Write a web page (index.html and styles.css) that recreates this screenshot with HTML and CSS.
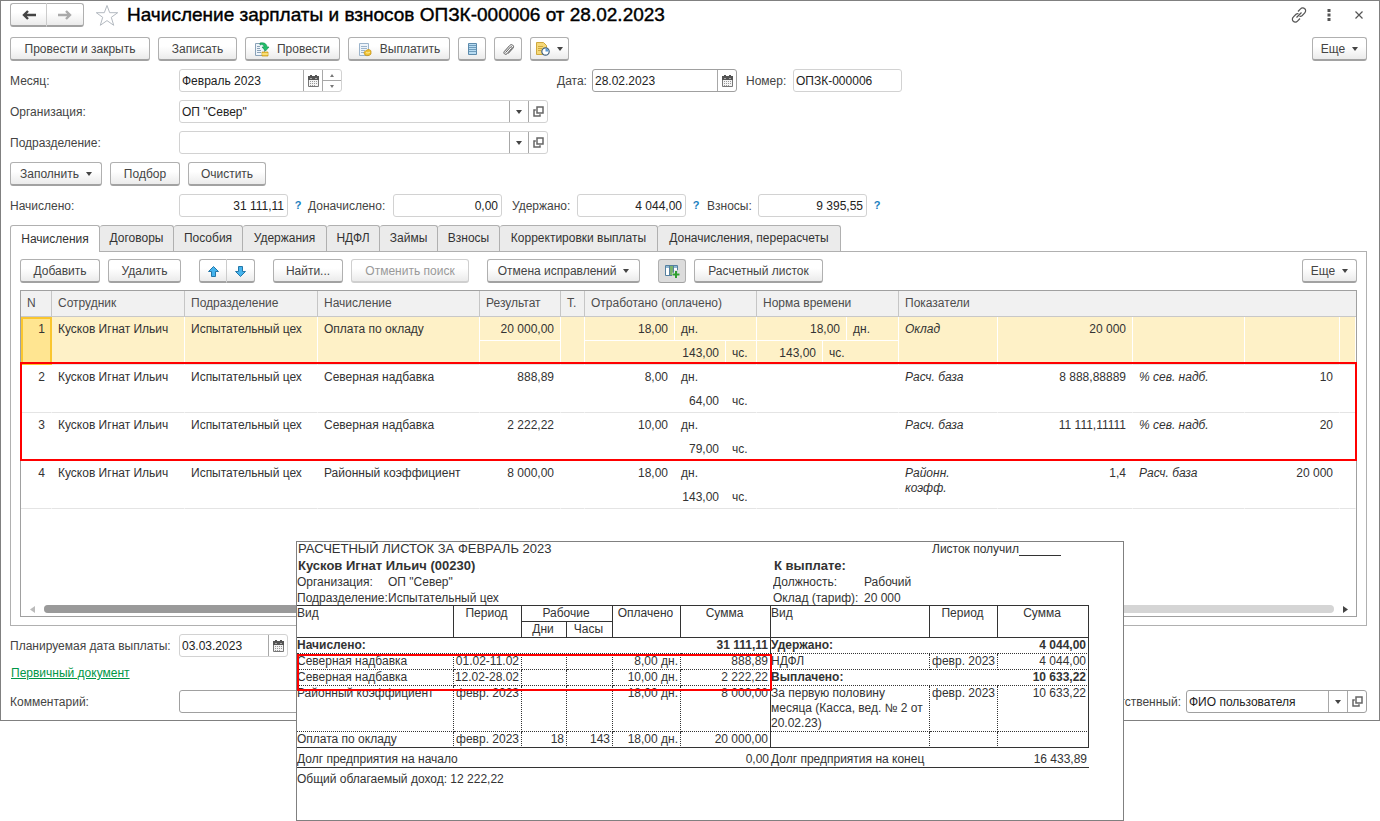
FILE: index.html
```html
<!DOCTYPE html>
<html lang="ru">
<head>
<meta charset="utf-8">
<title>Начисление зарплаты и взносов</title>
<link rel="stylesheet" href="styles.css">
</head>
<body>
<svg class="defs" aria-hidden="true">
  <symbol id="cal" viewBox="0 0 11 12"><path d="M.5 1.500h10v10H.5z" fill="#f4f4f4" stroke="#777"/><path d="M0 1h11v4H0z" fill="#555"/><path d="M2 0h2v2H2zM7 0h2v2H7z" fill="#555"/><path d="M2 3h2v1H2zM7 3h2v1H7z" fill="#aaa"/><path d="M2 6h1v1H2zM4 6h1v1H4zM6 6h1v1H6zM8 6h1v1H8zM2 8h1v1H2zM4 8h1v1H4zM6 8h1v1H6zM8 8h1v1H8zM2 10h1v1H2zM4 10h1v1H4zM6 10h1v1H6z" fill="#999"/></symbol>
  <symbol id="open" viewBox="0 0 11 11"><path d="M4 1h6v6H4z" fill="none" stroke="#666" stroke-width="1.500"/><path d="M2.800 4H1v6h6V8.200" fill="none" stroke="#666" stroke-width="1.500"/></symbol>
  <symbol id="down" viewBox="0 0 6 4"><path d="M0 0h6L3 4z" fill="#444"/></symbol>
</svg>
<main class="window">
  <header class="titlebar">
    <div class="pair nav">
      <button class="btn" aria-label="Назад"><svg width="14" height="10" viewBox="0 0 14 10"><path d="M14 5H3M6 1L2 5l4 4" fill="none" stroke="#444" stroke-width="2.400"/></svg></button><button class="btn" aria-label="Вперед"><svg width="14" height="10" viewBox="0 0 14 10"><path d="M0 5h11M8 1l4 4-4 4" fill="none" stroke="#aaa" stroke-width="2.400"/></svg></button>
    </div>
    <button class="plain star" aria-label="Избранное"><svg width="24" height="23" viewBox="0 0 24 23"><path d="M12 1.500l2.700 7.200h8L16.300 13.300l2.400 8L12 16.600l-6.700 4.700 2.400-8L1.300 8.700h8z" fill="#fff" stroke="#b3b9c0"/></svg></button>
    <h1>Начисление зарплаты и взносов ОПЗК-000006 от 28.02.2023</h1>
    <div class="tools">
      <button class="plain" aria-label="Ссылка"><svg width="16" height="16" viewBox="0 0 16 16"><path d="M7 4.500l2.500-2.700a2.800 2.800 0 0 1 4.300 0 2.800 2.800 0 0 1 0 4L11 8.700a2.600 2.600 0 0 1-2.500.5M9 11.500l-2.500 2.700a2.800 2.800 0 0 1-4.300 0 2.800 2.800 0 0 1 0-4L5 7.300a2.600 2.600 0 0 1 2.500-.5M5.500 10.500l5-5" fill="none" stroke="#555" stroke-width="1.200"/></svg></button>
      <button class="plain" aria-label="Меню"><svg width="4" height="12" viewBox="0 0 4 12"><path d="M.5 0h3v3h-3zM.5 4.500h3v3h-3zM.5 9h3v3h-3z" fill="#555"/></svg></button>
      <button class="plain" aria-label="Закрыть"><svg width="8" height="8" viewBox="0 0 8 8"><path d="M.5.5l7 7M7.500.5l-7 7" stroke="#555" stroke-width="1.200"/></svg></button>
    </div>
  </header>

  <div class="bar">
    <button class="btn w140">Провести и закрыть</button>
    <button class="btn w79">Записать</button>
    <button class="btn w95"><svg width="15" height="15" viewBox="0 0 15 15"><path d="M.5 1.500h9v12h-9z" fill="#eef4fa" stroke="#8aa2b8"/><path d="M2 4.500h3M2 6.500h3M2 8.500h4M2 10.500h4" stroke="#8aa2b8"/><path d="M5 1c4-1 7 1 7 4h2l-3.500 4L7 5h2c0-2-2-3-4-2z" fill="#1fbf68" stroke="#12894a" stroke-width=".6"/><path d="M7 10h6v4H7z" fill="#f2c83c" stroke="#c29317" stroke-width=".7"/><path d="M7 12h6" stroke="#fff3b0"/></svg>Провести</button>
    <button class="btn w102"><svg width="15" height="15" viewBox="0 0 15 15"><path d="M1.500 1.500h9v12h-9z" fill="#eef4fa" stroke="#9cb4cb"/><path d="M3 4.500h6M3 6.500h6M3 8.500h4M3 10.500h3" stroke="#9cb4cb"/><path d="M6 11c0-2 2-2 3-3s4 0 4 1v3c-1 2-5 2-6 1z" fill="#f0c232" stroke="#bd8d18" stroke-width=".7"/><path d="M8 10.500c1 .8 3 .5 4-.5" fill="none" stroke="#fff0a0"/></svg>Выплатить</button>
    <button class="btn w28" aria-label="Реестр"><svg width="9" height="12" viewBox="0 0 9 12"><path d="M.5.5h8v11h-8z" fill="#b9dcf2" stroke="#5d8bac"/><path d="M1 2.500h7M1 4.500h7M1 6.500h7M1 8.500h7" stroke="#6f9dbd"/></svg></button>
    <button class="btn w28" aria-label="Файлы"><svg width="13" height="13" viewBox="0 0 13 13"><path d="M3.500 9.500l5-5.500c1-1 2.300.3 1.400 1.300L5 10.700c-1.600 1.700-4.200-.4-2.600-2.300L7.700 2.500c2-2.200 5.300.5 3.200 2.800L6 10.700" fill="none" stroke="#555" stroke-width="1"/></svg></button>
    <button class="btn w39" aria-label="Отчеты"><svg width="14" height="14" viewBox="0 0 14 14"><path d="M.5.5h7l3 3v9H.5z" fill="#f5d878" stroke="#cfa83e"/><path d="M2 4.500h5M2 6.500h4M2 8.500h3" stroke="#cfa83e"/><circle cx="9.500" cy="9.500" r="3.700" fill="#fff" stroke="#42627f" stroke-width="1.200"/><path d="M9.500 9.500V6.500a3 3 0 0 1 3 3z" fill="#5b9bd5"/></svg><svg width="6" height="4"><use href="#down"/></svg></button>
    <button class="btn w55 last">Еще <svg width="6" height="4"><use href="#down"/></svg></button>
  </div>

  <div class="row">
    <label class="lead" for="month">Месяц:</label>
    <div class="slot"><div class="field month"><input id="month" value="Февраль 2023"><button aria-label="Календарь"><svg width="11" height="12"><use href="#cal"/></svg></button><span class="spin"><button aria-label="Больше"><svg width="4" height="3" viewBox="0 0 4 3"><path d="M0 3h4L2 0z" fill="#777"/></svg></button><button aria-label="Меньше"><svg width="4" height="3" viewBox="0 0 4 3"><path d="M0 0h4L2 3z" fill="#777"/></svg></button></span></div></div>
    <label class="date-label" for="date">Дата:</label>
    <div class="field active date"><input id="date" value="28.02.2023"><button aria-label="Календарь"><svg width="11" height="12"><use href="#cal"/></svg></button></div>
    <label class="number-label" for="number">Номер:</label>
    <div class="field small"><input id="number" value="ОПЗК-000006"></div>
  </div>
  <div class="row">
    <label class="lead" for="org">Организация:</label>
    <div class="field slot"><input id="org" value='ОП "Север"'><button aria-label="Выбрать"><svg width="6" height="4"><use href="#down"/></svg></button><button aria-label="Открыть"><svg width="11" height="11"><use href="#open"/></svg></button></div>
  </div>
  <div class="row">
    <label class="lead" for="dept">Подразделение:</label>
    <div class="field slot"><input id="dept"><button aria-label="Выбрать"><svg width="6" height="4"><use href="#down"/></svg></button><button aria-label="Открыть"><svg width="11" height="11"><use href="#open"/></svg></button></div>
  </div>
  <div class="bar">
    <button class="btn w92">Заполнить <svg width="6" height="4"><use href="#down"/></svg></button>
    <button class="btn w70">Подбор</button>
    <button class="btn w78">Очистить</button>
  </div>
  <div class="row">
    <label class="lead" for="accrued">Начислено:</label>
    <div class="field small num"><input id="accrued" value="31 111,11"></div><button class="plain help">?</button>
    <label class="extra-label" for="extra">Доначислено:</label>
    <div class="field small num"><input id="extra" value="0,00"></div>
    <label class="held-label" for="held">Удержано:</label>
    <div class="field small num"><input id="held" value="4 044,00"></div><button class="plain help">?</button>
    <label class="contrib-label" for="contrib">Взносы:</label>
    <div class="field small num"><input id="contrib" value="9 395,55"></div><button class="plain help">?</button>
  </div>

  <section class="tabbed">
    <nav class="tabs" role="tablist">
      <button role="tab" aria-selected="true" class="w90 current">Начисления</button><button role="tab" class="w74">Договоры</button><button role="tab" class="w69">Пособия</button><button role="tab" class="w84">Удержания</button><button role="tab" class="w53">НДФЛ</button><button role="tab" class="w58">Займы</button><button role="tab" class="w62">Взносы</button><button role="tab" class="w158">Корректировки выплаты</button><button role="tab" class="w183">Доначисления, перерасчеты</button>
    </nav>
    <div class="panel">
      <div class="bar">
        <button class="btn w80">Добавить</button>
        <button class="btn w73">Удалить</button>
        <div class="pair move">
          <button class="btn" aria-label="Вверх"><svg width="11" height="11" viewBox="0 0 11 11"><path d="M5.500.5l5 5h-3v5h-4v-5h-3z" fill="#45b4ee" stroke="#2477a8"/></svg></button><button class="btn" aria-label="Вниз"><svg width="11" height="11" viewBox="0 0 11 11"><path d="M5.500 10.500l5-5h-3v-5h-4v5h-3z" fill="#45b4ee" stroke="#2477a8"/></svg></button>
        </div>
        <button class="btn w70">Найти...</button>
        <button class="btn w118" disabled>Отменить поиск</button>
        <button class="btn w153 apart">Отмена исправлений <svg width="6" height="4"><use href="#down"/></svg></button>
        <button class="btn w28 apart pressed" aria-label="Показатели"><svg width="15" height="13" viewBox="0 0 15 13"><path d="M.5.5h12v10H.5z" fill="#fff" stroke="#55809f"/><path d="M1 1h11v2H1z" fill="#8fb7d3"/><path d="M5 1h3v9H5z" fill="#79b36c"/><path d="M4.500 1v9M8.500 1v9" stroke="#55809f"/><path d="M11 5v8M7 9.500h8" stroke="#e4e4e4" stroke-width="3.500"/><path d="M11 6v7M7.500 9.500h7" stroke="#2f9e2f" stroke-width="2"/></svg></button>
        <button class="btn w129">Расчетный листок</button>
        <button class="btn w55 last">Еще <svg width="6" height="4"><use href="#down"/></svg></button>
      </div>
      <div class="list">
        <table class="grid">
          <colgroup><col class="c31"><col class="c133"><col class="c133"><col class="c162"><col class="c81"><col class="c24"><col class="c172"><col class="c142"><col class="c99"><col class="c135"><col class="c112"><col class="c95"><col></colgroup>
          <thead><tr><th>N</th><th>Сотрудник</th><th>Подразделение</th><th>Начисление</th><th>Результат</th><th>Т.</th><th>Отработано (оплачено)</th><th>Норма времени</th><th colspan="5">Показатели</th></tr></thead>
          <tbody>
            <tr class="selected"><td class="num key">1</td><td>Кусков Игнат Ильич</td><td>Испытательный цех</td><td>Оплата по окладу</td>
              <td class="split"><div class="line"><span class="val all">20 000,00</span></div><div class="line"></div></td><td></td>
              <td class="split"><div class="line"><span class="val days">18,00</span><span>дн.</span></div><div class="line"><span class="val hours">143,00</span><span>чс.</span></div></td>
              <td class="split"><div class="line"><span class="val days">18,00</span><span>дн.</span></div><div class="line"><span class="val norm">143,00</span><span>чс.</span></div></td>
              <td class="ital">Оклад</td><td class="num">20 000</td><td></td><td></td><td></td></tr>
            <tr><td class="num">2</td><td>Кусков Игнат Ильич</td><td>Испытательный цех</td><td>Северная надбавка</td><td class="num">888,89</td><td></td>
              <td class="split"><div class="line"><span class="val days">8,00</span><span>дн.</span></div><div class="line"><span class="val hours">64,00</span><span>чс.</span></div></td><td></td>
              <td class="ital">Расч. база</td><td class="num">8 888,88889</td><td class="ital">% сев. надб.</td><td class="num">10</td><td></td></tr>
            <tr><td class="num">3</td><td>Кусков Игнат Ильич</td><td>Испытательный цех</td><td>Северная надбавка</td><td class="num">2 222,22</td><td></td>
              <td class="split"><div class="line"><span class="val days">10,00</span><span>дн.</span></div><div class="line"><span class="val hours">79,00</span><span>чс.</span></div></td><td></td>
              <td class="ital">Расч. база</td><td class="num">11 111,11111</td><td class="ital">% сев. надб.</td><td class="num">20</td><td></td></tr>
            <tr><td class="num">4</td><td>Кусков Игнат Ильич</td><td>Испытательный цех</td><td>Районный коэффициент</td><td class="num">8 000,00</td><td></td>
              <td class="split"><div class="line"><span class="val days">18,00</span><span>дн.</span></div><div class="line"><span class="val hours">143,00</span><span>чс.</span></div></td><td></td>
              <td class="ital">Районн. коэфф.</td><td class="num">1,4</td><td class="ital">Расч. база</td><td class="num">20 000</td><td></td></tr>
          </tbody>
        </table>
        <div class="scroll"><svg width="5" height="7" viewBox="0 0 5 7"><path d="M5 0v7L0 3.500z" fill="#bbb"/></svg><div class="track"><div class="thumb"></div></div><svg width="5" height="7" viewBox="0 0 5 7"><path d="M0 0v7l5-3.500z" fill="#444"/></svg></div>
        <div class="mark rows-mark"></div>
      </div>
    </div>
  </section>

  <div class="row">
    <label class="lead" for="paydate">Планируемая дата выплаты:</label>
    <div class="field small"><input id="paydate" value="03.03.2023"><button aria-label="Календарь"><svg width="11" height="12"><use href="#cal"/></svg></button></div>
  </div>
  <div class="link-row"><a href="#">Первичный документ</a></div>
  <div class="row">
    <label class="lead" for="comment">Комментарий:</label>
    <div class="field active comment"><input id="comment"></div>
    <label class="resp-label" for="resp">Ответственный:</label>
    <div class="field active resp"><input id="resp" value="ФИО пользователя"><button aria-label="Выбрать"><svg width="6" height="4"><use href="#down"/></svg></button><button aria-label="Открыть"><svg width="11" height="11"><use href="#open"/></svg></button></div>
  </div>
</main>

<aside class="slip">
  <div class="slip-head">
    <div class="slip-left">
      <div class="slip-title">РАСЧЕТНЫЙ ЛИСТОК ЗА ФЕВРАЛЬ 2023</div>
      <div class="slip-name">Кусков Игнат Ильич (00230)</div>
      <div class="pairline"><span>Организация:</span><span>ОП "Север"</span></div>
      <div class="pairline"><span>Подразделение:</span><span>Испытательный цех</span></div>
    </div>
    <div class="slip-right">
      <div class="received">Листок получил<span class="signature"></span></div>
      <div class="slip-name">К выплате:</div>
      <div class="pairline"><span>Должность:</span><span>Рабочий</span></div>
      <div class="pairline"><span>Оклад (тариф):</span><span>20 000</span></div>
    </div>
  </div>
  <table class="pay">
    <colgroup><col class="c157"><col class="c68"><col class="c45"><col class="c46"><col class="c68"><col class="c90"><col class="c159"><col class="c68"><col class="c91"></colgroup>
    <thead>
      <tr><th rowspan="2" class="txt">Вид</th><th rowspan="2">Период</th><th colspan="2">Рабочие</th><th rowspan="2">Оплачено</th><th rowspan="2">Сумма</th><th rowspan="2" class="txt">Вид</th><th rowspan="2">Период</th><th rowspan="2">Сумма</th></tr>
      <tr><th>Дни</th><th>Часы</th></tr>
    </thead>
    <tbody>
      <tr class="strong"><td colspan="5" class="txt open">Начислено:</td><td class="mid">31 111,11</td><td colspan="2" class="txt open">Удержано:</td><td class="mid">4 044,00</td></tr>
      <tr><td class="txt">Северная надбавка</td><td>01.02-11.02</td><td></td><td></td><td>8,00 дн.</td><td class="mid">888,89</td><td class="txt">НДФЛ</td><td>февр. 2023</td><td class="mid">4 044,00</td></tr>
      <tr><td class="txt">Северная надбавка</td><td>12.02-28.02</td><td></td><td></td><td>10,00 дн.</td><td class="mid">2 222,22</td><td colspan="2" class="txt open bold">Выплачено:</td><td class="mid bold">10 633,22</td></tr>
      <tr class="tall"><td class="txt">Районный коэффициент</td><td>февр. 2023</td><td></td><td></td><td>18,00 дн.</td><td class="mid">8 000,00</td><td class="txt">За первую половину месяца (Касса, вед. № 2 от 20.02.23)</td><td>февр. 2023</td><td class="mid">10 633,22</td></tr>
      <tr class="end"><td class="txt">Оплата по окладу</td><td>февр. 2023</td><td>18</td><td>143</td><td>18,00 дн.</td><td class="mid">20 000,00</td><td></td><td></td><td class="mid"></td></tr>
      <tr class="debt"><td colspan="5" class="txt">Долг предприятия на начало</td><td>0,00</td><td colspan="2" class="txt">Долг предприятия на конец</td><td>16 433,89</td></tr>
    </tbody>
  </table>
  <div class="income">Общий облагаемый доход: 12 222,22</div>
  <div class="mark slip-mark"></div>
</aside>
</body>
</html>
```
FILE: styles.css
```css
* { box-sizing: border-box; }
body { margin: 0; min-height: 100vh; background: #fff; position: relative; font: 12px/15px "Liberation Sans", Arial, sans-serif; color: #444; }
button, input { font: inherit; color: inherit; margin: 0; padding: 0; }
svg { flex: none; display: block; }
.defs { position: absolute; width: 0; height: 0; }
.window { display: flex; flex-direction: column; gap: 8px; border: 1px solid #808080; padding: 2px 12px 7px 9px; }

.titlebar { display: flex; align-items: center; height: 24px; margin-bottom: 2px; }
h1 { margin: 0 0 0 8px; font-size: 19px; line-height: 24px; font-weight: 400; color: #000; -webkit-text-stroke: 0.4px #000; white-space: nowrap; }
.tools { display: flex; align-items: center; margin: 0 -7px 0 auto; }
.tools .plain { width: 30px; }
.plain { display: flex; align-items: center; justify-content: center; border: 0; background: none; }
.star { margin-left: 11px; }

.btn { display: flex; align-items: center; justify-content: center; gap: 7px; height: 24px; padding-top: 1px; border: 1px solid #b0b0b0; border-bottom: 2px solid #a2a2a2; border-radius: 3px; background: linear-gradient(#fff 40%, #ebebeb); color: #444; white-space: nowrap; }
.btn:disabled { color: #999; border-color: #cfcfcf; }
.btn.pressed { background: #dcdcdc; border-bottom-width: 1px; }
.pair { display: flex; }
.pair .btn:first-child { border-radius: 3px 0 0 3px; border-right-color: #ccc; }
.pair .btn:last-child { border-radius: 0 3px 3px 0; border-left: 0; }
.nav .btn { width: 37px; }
.move { margin: 0 10px; }
.move .btn { width: 28px; }
.apart { margin-left: 10px; }
.bar { display: flex; gap: 8px; }
.last { margin-left: auto; }

.w28 { width: 28px; } .w39 { width: 39px; } .w53 { width: 53px; } .w55 { width: 55px; } .w58 { width: 58px; }
.w62 { width: 62px; } .w69 { width: 69px; } .w70 { width: 70px; } .w73 { width: 73px; } .w74 { width: 74px; }
.w78 { width: 78px; } .w79 { width: 79px; } .w80 { width: 80px; } .w84 { width: 84px; } .w90 { width: 90px; }
.w92 { width: 92px; } .w95 { width: 95px; } .w102 { width: 102px; } .w118 { width: 118px; } .w129 { width: 129px; }
.w140 { width: 140px; } .w153 { width: 153px; } .w158 { width: 158px; } .w183 { width: 183px; }

.row { display: flex; align-items: center; }
.row label { padding-top: 1px; white-space: nowrap; }
.lead { width: 169px; flex: none; }
.slot { width: 369px; }
.field { display: flex; height: 23px; border: 1px solid #d2d2d2; border-radius: 3px; background: #fff; overflow: hidden; }
.field.active { border-color: #a0a0a0; }
.field input { flex: 1; min-width: 0; border: 0; outline: 0; padding: 2px 2px 0; background: none; color: #222; }
.field.num input { text-align: right; padding-right: 3px; }
.field > button { flex: none; display: flex; align-items: center; justify-content: center; width: 19px; border: 0; border-left: 1px solid #a8a8a8; background: none; }
.month { width: 163px; }
.spin { display: flex; flex-direction: column; width: 19px; border-left: 1px solid #a8a8a8; }
.spin button { flex: 1; display: flex; align-items: center; justify-content: center; border: 0; background: none; }
.spin button:first-child { border-bottom: 1px solid #a8a8a8; }
.date { width: 145px; }
.small { width: 109px; }
.date-label { width: 35px; margin-left: 9px; }
.number-label { width: 47px; margin-left: 9px; }
.help { width: 20px; font-weight: 700; font-size: 11px; color: #1a7fc0; }
.extra-label { width: 85px; }
.held-label { width: 65px; margin-left: 10px; }
.contrib-label { width: 51px; margin-left: 1px; }

.tabs { display: flex; }
.tabs button { height: 26px; border: 1px solid #b0b0b0; border-width: 1px 1px 0 0; border-radius: 3px 3px 0 0; background: #ebebeb; color: #333; white-space: nowrap; }
.tabs .current { position: relative; height: 27px; margin-bottom: -1px; border-left-width: 1px; background: #fff; }
.panel { border: 1px solid #b0b0b0; padding: 7px 9px 8px; display: flex; flex-direction: column; gap: 7px; }

.list { position: relative; display: flex; flex-direction: column; min-height: 327px; border: 1px solid #a0a0a0; }
.grid { width: 100%; table-layout: fixed; border-collapse: separate; border-spacing: 0; color: #333; }
.grid th { height: 26px; padding: 0 6px 1px; text-align: left; font-weight: 400; color: #4d4d4d; background: #f1f1f1; border-right: 1px solid #c6c6c6; border-bottom: 1px solid #c8c8c8; white-space: nowrap; }
.grid th:last-child { border-right: 0; }
.grid td { height: 48px; padding: 5px 6px 0; vertical-align: top; border-right: 1px solid transparent; border-bottom: 1px solid #e4e4e4; }
.grid .num { text-align: right; }
.grid .ital { font-style: italic; }
.grid td.split { padding: 0; }
.selected td { background: #fef1c7; border-right-color: #fff; }
.grid td.key { background: #ffe591; border: 2px solid #fac62e; padding: 3px 5px 0; }
.line { display: flex; height: 24px; line-height: 25px; }
.line + .line { height: 23px; }
.line .val { flex: none; padding-right: 6px; text-align: right; border-right: 1px solid transparent; }
.line .val + span { padding-left: 6px; }
.selected .line:first-child { border-bottom: 1px solid #fff; }
.selected .line .val { border-right-color: #fff; }
.days { width: 90px; } .hours { width: 141px; } .norm { width: 66px; }
.line .all { width: 80px; border-right: 0; }
.c24 { width: 24px; } .c31 { width: 31px; } .c45 { width: 45px; } .c46 { width: 46px; } .c68 { width: 68px; }
.c81 { width: 81px; } .c90 { width: 90px; } .c91 { width: 91px; } .c95 { width: 95px; } .c99 { width: 99px; }
.c112 { width: 112px; } .c133 { width: 133px; } .c135 { width: 135px; } .c142 { width: 142px; } .c157 { width: 157px; }
.c159 { width: 159px; } .c162 { width: 162px; } .c172 { width: 172px; }
.scroll { display: flex; align-items: center; gap: 9px; margin-top: auto; padding: 0 8px 3px 9px; }
.track { flex: 1; height: 8px; border-radius: 4px; background: #d5d5d5; }
.thumb { width: 70%; height: 8px; border-radius: 4px; background: #9a9a9a; }
.mark { position: absolute; border: 2px solid #f00; pointer-events: none; }
.rows-mark { left: -1px; right: -1px; top: 71px; height: 99px; }

.link-row { display: flex; align-items: center; height: 17px; padding-left: 1px; }
.link-row a { color: #009646; }
.comment { flex: 1; }
.resp-label { margin: 0 5px 0 9px; }
.resp { width: 181px; }

.slip { position: absolute; left: 296px; top: 541px; width: 828px; height: 280px; border: 1px solid #808080; background: #fff; color: #333; overflow: hidden; }
.slip-head { display: flex; height: 63px; }
.slip-left { width: 476px; }
.slip-title { height: 14px; padding-left: 1px; font-size: 13px; line-height: 14px; }
.slip-name { height: 18px; padding-left: 1px; font-size: 13px; line-height: 20px; font-weight: 700; }
.pairline { display: flex; height: 16px; line-height: 16px; white-space: nowrap; }
.pairline span:first-child { width: 91px; overflow: hidden; }
.received { display: flex; height: 14px; padding-left: 159px; line-height: 14px; }
.signature { width: 42px; border-bottom: 1px solid #333; }
.pay { width: 792px; table-layout: fixed; border-collapse: separate; border-spacing: 0; border-top: 1px solid #333; line-height: 15px; }
.pay th, .pay td { height: 16px; padding: 0 2px 0 0; vertical-align: top; text-align: right; white-space: nowrap; border-right: 1px dotted #333; border-bottom: 1px dotted #333; }
.pay th { font-weight: 400; text-align: center; border-style: solid; border-width: 0 1px 1px 0; }
.pay .txt { text-align: left; white-space: normal; }
.pay .mid { border-right-style: solid; }
.pay .open { border-right: 0; }
.pay .strong td, .pay .bold { font-weight: 700; }
.pay .tall td { height: 46px; }
.pay .end td { border-bottom-style: solid; }
.pay .debt td { height: 20px; padding-top: 4px; border-right: 0; border-bottom-style: solid; }
.income { padding-top: 4px; }
.slip-mark { left: 0; top: 112px; width: 475px; height: 37px; }
```
